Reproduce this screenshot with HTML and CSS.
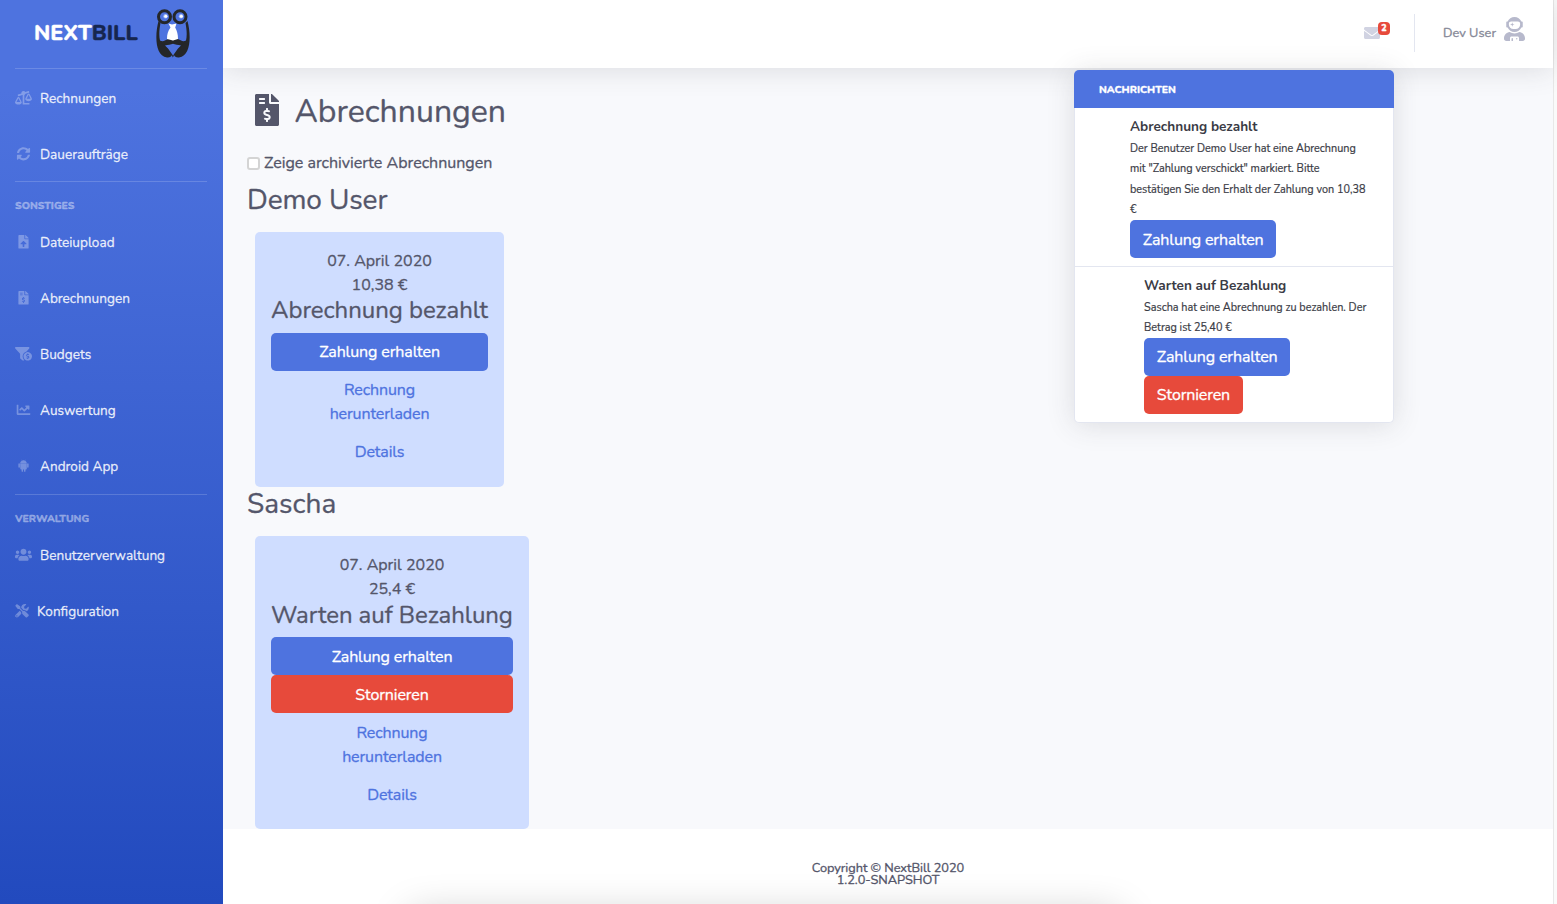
FILE: index.html
```html
<!DOCTYPE html>
<html lang="de">
<head>
<meta charset="utf-8">
<title>NextBill</title>
<link rel="stylesheet" href="styles.css">
</head>
<body>
<div class="page">
  <aside class="sidebar">
    <div class="brand">
      <div class="brand-name">NEXT<span class="brand-dark">BILL</span></div>
      <svg class="brand-logo" viewBox="0 0 34 50">
        <path d="M2.500 12C-1 25-1.500 47 11 48.500C14 48.800 16 47 17 44.500C18 47 20 48.800 23 48.500C35.500 47 35 25 31.500 12L29.500 14C31 22 31 27 30 31.500C27 33 25 31.500 23 30.500C21 29.500 19 29.500 17 31.500C15 29.500 13 29.500 11 30.500C9 31.500 7 33 4 31.500C3 27 3 22 4.500 14Z" fill="#242629"/>
        <path d="M17 49L16.300 46C16 43 19 41 19 38C19 36.500 18 35 17 34.500L15 34.500C14 37 16 40 17 42Z" fill="#242629"/>
        <path d="M16.400 47V44.500C13.500 40.500 9.500 39.500 7 35.500C10.500 36.300 14 36 17 34.500C20 36 23.500 36.300 27 35.500C24.500 39.500 20.500 40.500 17.600 44.500V47Z" fill="#242629"/>
        <path d="M16.600 48V44C13.500 39 8.500 38.500 5.500 34.500C9 35.800 12 35.300 13.500 35C13.800 38.500 15.500 41 17 43C18.500 41 20.200 38.500 20.500 35C22 35.300 25 35.800 28.500 34.500C25.500 38.500 20.500 39 17.400 44V48Z" fill="#242629"/>
        <path d="M17 46.500L12 39.500L9 36.500C12 36 15 35.800 17 34.800C19 35.800 22 36 25 36.500L22 39.500Z" fill="#4e73df"/>
        <path d="M12.500 14.500L16 15.500L20.500 14.500L19.200 18.500C21 22 22 25 22 30L17 31.500L11 30C11 25 12 22 14.500 18.500Z" fill="#fff"/>
        <circle cx="8.500" cy="7.800" r="6" fill="#4e73df" stroke="#242629" stroke-width="3"/>
        <circle cx="24" cy="7.800" r="6" fill="#4e73df" stroke="#242629" stroke-width="3"/>
        <circle cx="9.500" cy="7.300" r="2.200" fill="#9fb6f2"/><circle cx="25" cy="7.300" r="2.200" fill="#9fb6f2"/>
        <circle cx="9.800" cy="7.200" r="1.500" fill="#fff"/><circle cx="25.300" cy="7.200" r="1.500" fill="#fff"/>
      </svg>
    </div>
    <hr class="divider">
    <nav class="nav nav-first">
      <a class="nav-item"><svg class="nav-icon" viewBox="0 0 640 512"><path d="M528 448H352V153.250c20.420-8.940 36.100-26.220 43.380-47.470l132-44.260c8.380-2.810 12.890-11.880 10.080-20.260l-10.170-30.340C524.480 2.540 515.410-1.970 507.030.84L389.110 40.370C375.300 16.360 349.690 0 320 0c-44.180 0-80 35.820-80 80 0 3.430.59 6.710 1.010 10.030l-128.390 43.050c-8.380 2.810-12.890 11.880-10.080 20.260l10.170 30.340c2.810 8.380 11.880 12.890 20.260 10.080l142.050-47.630c4.070 2.770 8.430 5.120 12.990 7.120V496c0 8.840 7.160 16 16 16h224c8.840 0 16-7.160 16-16v-32c-.01-8.840-7.170-16-16.010-16zm111.980-144c0-16.180 1.340-8.730-85.050-181.510-17.650-35.290-68.190-35.360-85.870 0-87.120 174.260-85.040 165.840-85.040 181.510H384c0 44.180 57.310 80 128 80s128-35.820 128-80h-.02zM440 288l72-144 72 144H440zm-269.070-37.510c-17.650-35.290-68.190-35.360-85.870 0C-2.060 424.750.02 416.330.02 432H0c0 44.180 57.310 80 128 80s128-35.820 128-80h-.02c0-16.180 1.350-8.730-85.050-181.510zM56 416l72-144 72 144H56z"/></svg><span>Rechnungen</span></a>
      <a class="nav-item"><svg class="nav-icon" viewBox="-64 0 640 512"><path d="M370.720 133.280C339.458 104.008 298.888 87.962 255.848 88c-77.458.068-144.328 53.178-162.791 126.850-1.344 5.363-6.122 9.150-11.651 9.150H24.103c-7.498 0-13.194-6.807-11.807-14.176C33.933 94.924 134.813 8 256 8c66.448 0 126.791 26.136 171.315 68.685L463.030 40.970C478.149 25.851 504 36.559 504 57.941V192c0 13.255-10.745 24-24 24H345.941c-21.382 0-32.090-25.851-16.971-40.971l41.750-41.749zM32 296h134.059c21.382 0 32.090 25.851 16.971 40.971l-41.750 41.750c31.262 29.273 71.835 45.319 114.876 45.280 77.418-.07 144.315-53.144 162.787-126.849 1.344-5.363 6.122-9.150 11.651-9.150h57.304c7.498 0 13.194 6.807 11.807 14.176C478.067 417.076 377.187 504 256 504c-66.448 0-126.791-26.136-171.315-68.685L48.970 471.030C33.851 486.149 8 475.441 8 454.059V320c0-13.255 10.745-24 24-24z"/></svg><span>Daueraufträge</span></a>
    </nav>
    <hr class="divider divider-up">
    <div class="nav-heading">SONSTIGES</div>
    <nav class="nav">
      <a class="nav-item"><svg class="nav-icon" viewBox="-128 0 640 512"><path d="M224 136V0H24C10.700 0 0 10.700 0 24v464c0 13.300 10.700 24 24 24h336c13.300 0 24-10.700 24-24V160H248c-13.200 0-24-10.800-24-24zm65.180 216.010H224v80c0 8.840-7.160 16-16 16h-32c-8.840 0-16-7.160-16-16v-80H94.820c-14.280 0-21.410-17.290-11.270-27.360l96.420-95.700c6.650-6.610 17.390-6.610 24.040 0l96.420 95.700c10.150 10.070 3.030 27.360-11.250 27.360zM377 105L279.100 7c-4.500-4.500-10.600-7-17-7H256v128h128v-6.100c0-6.300-2.500-12.400-7-16.900z"/></svg><span>Dateiupload</span></a>
      <a class="nav-item"><svg class="nav-icon" viewBox="-128 0 640 512"><path d="M377 105L279.100 7c-4.500-4.500-10.600-7-17-7H256v128h128v-6.100c0-6.300-2.500-12.400-7-16.900zm-153 31V0H24C10.700 0 0 10.700 0 24v464c0 13.300 10.700 24 24 24h336c13.300 0 24-10.700 24-24V160H248c-13.200 0-24-10.800-24-24zM64 72c0-4.420 3.580-8 8-8h80c4.420 0 8 3.580 8 8v16c0 4.420-3.580 8-8 8H72c-4.420 0-8-3.580-8-8V72zm0 80v-16c0-4.420 3.580-8 8-8h80c4.420 0 8 3.580 8 8v16c0 4.420-3.580 8-8 8H72c-4.420 0-8-3.580-8-8zm144 263.880V440c0 4.420-3.580 8-8 8h-16c-4.420 0-8-3.580-8-8v-24.290c-11.290-.58-22.270-4.520-31.370-11.350-3.900-2.930-4.100-8.770-.57-12.140l11.750-11.210c2.770-2.640 6.890-2.760 10.130-.73 3.870 2.420 8.260 3.720 12.820 3.720h28.110c6.500 0 11.800-5.920 11.800-13.190 0-5.950-3.610-11.190-8.770-12.730l-45-13.500c-18.590-5.580-31.580-23.420-31.580-43.390 0-24.520 19.050-44.440 42.670-45.070V232c0-4.420 3.580-8 8-8h16c4.420 0 8 3.580 8 8v24.290c11.290.58 22.270 4.510 31.370 11.350 3.900 2.930 4.100 8.770.57 12.140l-11.750 11.210c-2.770 2.640-6.890 2.760-10.130.73-3.870-2.430-8.260-3.720-12.820-3.720h-28.110c-6.500 0-11.800 5.920-11.800 13.190 0 5.950 3.610 11.190 8.770 12.730l45 13.500c18.590 5.580 31.580 23.420 31.580 43.390 0 24.530-19.050 44.440-42.670 45.070z"/></svg><span>Abrechnungen</span></a>
      <a class="nav-item"><svg class="nav-icon" viewBox="0 0 640 512"><path fill-rule="evenodd" d="M433.460 165.940l101.200-111.870C554.610 34.120 540.480 0 512.260 0H31.740C3.520 0-10.610 34.120 9.340 54.070L192 256v155.920c0 12.590 5.930 24.440 16 32l79.990 60c20.860 15.640 48.470 6.970 59.220-13.570C310.800 455.380 288 406.350 288 352c0-89.790 62.050-165.170 145.460-186.060zM480 192a160 160 0 1 0 .1 0zm16 239.880V448c0 4.420-3.580 8-8 8h-16c-4.420 0-8-3.580-8-8v-16.290c-11.290-.58-22.270-4.520-31.370-11.350-3.900-2.930-4.100-8.770-.57-12.140l11.750-11.210c2.770-2.640 6.890-2.760 10.130-.73 3.870 2.420 8.260 3.720 12.820 3.720h28.110c6.500 0 11.800-5.920 11.800-13.190 0-5.950-3.610-11.190-8.770-12.730l-45-13.500c-18.590-5.580-31.580-23.420-31.580-43.390 0-24.520 19.050-44.440 42.670-45.070V256c0-4.420 3.580-8 8-8h16c4.420 0 8 3.580 8 8v16.290c11.290.58 22.270 4.510 31.370 11.350 3.900 2.930 4.100 8.770.57 12.140l-11.750 11.210c-2.770 2.640-6.890 2.760-10.130.73-3.870-2.430-8.260-3.720-12.820-3.720h-28.110c-6.500 0-11.800 5.920-11.800 13.190 0 5.950 3.610 11.190 8.770 12.730l45 13.500c18.590 5.580 31.580 23.420 31.580 43.390 0 24.530-19.040 44.440-42.670 45.070z"/></svg><span>Budgets</span></a>
      <a class="nav-item"><svg class="nav-icon" viewBox="-64 0 640 512"><path d="M496 384H64V80c0-8.840-7.160-16-16-16H16C7.160 64 0 71.160 0 80v336c0 17.670 14.330 32 32 32h464c8.840 0 16-7.160 16-16v-32c0-8.840-7.160-16-16-16zM464 96H345.940c-21.380 0-32.090 25.850-16.970 40.970l32.400 32.400L288 242.750l-73.370-73.370c-12.500-12.500-32.760-12.500-45.250 0l-68.690 68.690c-6.250 6.250-6.250 16.380 0 22.630l22.620 22.620c6.250 6.250 16.380 6.250 22.630 0L192 237.250l73.370 73.370c12.500 12.500 32.760 12.500 45.250 0l96-96 32.400 32.400c15.120 15.120 40.970 4.410 40.970-16.970V112c.01-8.840-7.150-16-15.990-16z"/></svg><span>Auswertung</span></a>
      <a class="nav-item"><svg class="nav-icon" viewBox="-96 0 640 512"><path d="M32 184v117c0 32 56 32 56 0V184c0-32-56-32-56 0zm68-7h248v192c0 16-13 29-29 29h-20v61c0 32-55 32-55 0v-61h-38v61c0 32-54 32-54 0v-61h-20c-16 0-29-13-29-29zm248-12H99c0-43 26-80 64-99l-19-35c-3-7 6-10 9-5l20 36c32-14 70-14 102 0l20-36c3-5 12-2 9 5l-19 35c37 19 63 56 63 99zm12 19c0-32 56-32 56 0v117c0 32-56 32-56 0z"/></svg><span>Android App</span></a>
    </nav>
    <hr class="divider">
    <div class="nav-heading">VERWALTUNG</div>
    <nav class="nav">
      <a class="nav-item"><svg class="nav-icon" viewBox="0 0 640 512"><path d="M96 224c35.300 0 64-28.700 64-64s-28.700-64-64-64-64 28.700-64 64 28.700 64 64 64zm448 0c35.300 0 64-28.700 64-64s-28.700-64-64-64-64 28.700-64 64 28.700 64 64 64zm32 32h-64c-17.600 0-33.500 7.100-45.100 18.600 40.300 22.100 68.900 62 75.100 109.400h66c17.700 0 32-14.300 32-32v-32c0-35.300-28.700-64-64-64zm-256 0c61.900 0 112-50.100 112-112S381.900 32 320 32 208 82.100 208 144s50.100 112 112 112zm76.800 32h-8.300c-20.800 10-43.900 16-68.500 16s-47.600-6-68.500-16h-8.300C179.600 288 128 339.600 128 403.200V432c0 26.500 21.500 48 48 48h288c26.500 0 48-21.500 48-48v-28.800c0-63.600-51.600-115.200-115.200-115.200zm-223.700-13.400C161.500 263.100 145.600 256 128 256H64c-35.300 0-64 28.700-64 64v32c0 17.700 14.300 32 32 32h65.900c6.300-47.400 34.900-87.300 75.200-109.400z"/></svg><span>Benutzerverwaltung</span></a>
      <a class="nav-item"><svg class="nav-icon nav-icon-narrow" viewBox="0 0 512 512"><path d="M501.100 395.700L384 278.600c-23.100-23.100-57.600-27.600-85.400-13.900L192 158.100V96L64 0 0 64l96 128h62.100l106.600 106.600c-13.600 27.800-9.200 62.300 13.900 85.400l117.100 117.100c14.600 14.600 38.200 14.600 52.700 0l52.700-52.700c14.500-14.600 14.500-38.200 0-52.700zM331.700 225c28.300 0 54.900 11 74.900 31l19.400 19.400c15.800-6.900 30.800-16.500 43.800-29.500 37.100-37.100 49.700-89.300 37.900-136.700-2.200-9-13.500-12.100-20.100-5.500l-74.400 74.400-67.900-11.300L334 98.900l74.400-74.400c6.600-6.600 3.400-17.900-5.700-20.200-47.400-11.700-99.600.9-136.600 37.900-28.500 28.500-41.900 66.100-41.200 103.600l82.100 82.100c8.100-1.900 16.500-2.900 24.700-2.900zm-103.900 82l-56.700-56.700L18.700 402.800c-25 25-25 65.500 0 90.500s65.500 25 90.500 0l123.600-123.600c-7.600-19.900-9.900-41.600-5-62.700zM64 472c-13.200 0-24-10.800-24-24 0-13.300 10.700-24 24-24s24 10.700 24 24c0 13.200-10.700 24-24 24z"/></svg><span>Konfiguration</span></a>
    </nav>
  </aside>

  <div class="content">
    <header class="topbar">
      <div class="mail">
        <svg class="mail-icon" viewBox="0 0 512 512"><path d="M502.300 190.800c3.900-3.100 9.700-.2 9.700 4.700V400c0 26.500-21.500 48-48 48H48c-26.500 0-48-21.500-48-48V195.600c0-5 5.700-7.800 9.700-4.700 22.400 17.400 52.100 39.500 154.100 113.600 21.100 15.400 56.700 47.800 92.200 47.600 35.700.3 72-32.800 92.300-47.600 102-74.100 131.600-96.300 154-113.700zM256 320c23.200.4 56.600-29.200 73.400-41.400 132.700-96.300 142.800-104.700 173.400-128.700 5.800-4.500 9.200-11.500 9.200-18.900v-19c0-26.500-21.500-48-48-48H48c-26.500 0-48 21.500-48 48v19c0 7.400 3.400 14.300 9.200 18.900 30.600 23.900 40.700 32.400 173.400 128.700 16.800 12.200 50.200 41.800 73.400 41.400z"/></svg>
        <span class="badge">2</span>
      </div>
      <div class="separator"></div>
      <span class="user-name">Dev User</span>
      <svg class="avatar" viewBox="0 0 448 512"><path d="M64 224h13.500c24.700 56.500 80.900 96 146.500 96s121.800-39.500 146.500-96H384c8.800 0 16-7.200 16-16v-96c0-8.800-7.200-16-16-16h-13.500C345.800 39.500 289.600 0 224 0S102.200 39.500 77.500 96H64c-8.800 0-16 7.200-16 16v96c0 8.800 7.200 16 16 16zm40-88c0-22.100 21.500-40 48-40h144c26.500 0 48 17.900 48 40v24c0 53-43 96-96 96h-48c-53 0-96-43-96-96v-24zm72 72l12-36 36-12-36-12-12-36-12 36-36 12 36 12 12 36zm151.600 113.400C297.700 340.700 262.200 352 224 352s-73.700-11.300-103.600-30.600C52.900 328.500 0 385 0 454.400v9.600c0 26.500 21.500 48 48 48h80v-64c0-17.700 14.300-32 32-32h128c17.700 0 32 14.300 32 32v64h80c26.500 0 48-21.500 48-48v-9.600c0-69.400-52.900-125.900-120.400-133zM272 448c-8.800 0-16 7.200-16 16s7.200 16 16 16 16-7.200 16-16-7.200-16-16-16zm-96 0c-8.800 0-16 7.200-16 16v48h32v-48c0-8.800-7.200-16-16-16z"/></svg>
      <section class="messages">
        <h6 class="messages-head">NACHRICHTEN</h6>
        <div class="message">
          <div class="message-title">Abrechnung bezahlt</div>
          <div class="message-text">Der Benutzer Demo User hat eine Abrechnung<br>mit "Zahlung verschickt" markiert. Bitte<br>bestätigen Sie den Erhalt der Zahlung von 10,38<br>€</div>
          <a class="btn btn-primary btn-low">Zahlung erhalten</a>
        </div>
        <div class="message message-wide">
          <div class="message-title">Warten auf Bezahlung</div>
          <div class="message-text">Sascha hat eine Abrechnung zu bezahlen. Der<br>Betrag ist 25,40 €</div>
          <a class="btn btn-primary">Zahlung erhalten</a>
          <a class="btn btn-danger">Stornieren</a>
        </div>
      </section>
    </header>

    <main class="main">
      <h1 class="title"><svg class="title-icon" viewBox="0 0 384 512"><path d="M377 105L279.100 7c-4.500-4.500-10.600-7-17-7H256v128h128v-6.100c0-6.300-2.500-12.400-7-16.900zm-153 31V0H24C10.700 0 0 10.700 0 24v464c0 13.300 10.700 24 24 24h336c13.300 0 24-10.700 24-24V160H248c-13.200 0-24-10.800-24-24zM64 72c0-4.420 3.580-8 8-8h80c4.420 0 8 3.580 8 8v16c0 4.420-3.580 8-8 8H72c-4.420 0-8-3.580-8-8V72zm0 80v-16c0-4.420 3.580-8 8-8h80c4.420 0 8 3.580 8 8v16c0 4.420-3.580 8-8 8H72c-4.420 0-8-3.580-8-8zm144 263.880V440c0 4.420-3.580 8-8 8h-16c-4.420 0-8-3.580-8-8v-24.290c-11.290-.58-22.270-4.520-31.370-11.350-3.900-2.930-4.100-8.770-.57-12.140l11.750-11.210c2.770-2.640 6.890-2.760 10.130-.73 3.870 2.420 8.260 3.720 12.820 3.720h28.110c6.500 0 11.800-5.920 11.800-13.190 0-5.950-3.610-11.190-8.770-12.730l-45-13.500c-18.590-5.580-31.580-23.420-31.580-43.390 0-24.520 19.050-44.440 42.670-45.070V232c0-4.420 3.580-8 8-8h16c4.420 0 8 3.580 8 8v24.290c11.290.58 22.270 4.510 31.370 11.350 3.900 2.930 4.100 8.770.57 12.140l-11.750 11.210c-2.770 2.640-6.890 2.760-10.130.73-3.870-2.430-8.260-3.720-12.820-3.720h-28.110c-6.500 0-11.800 5.920-11.800 13.190 0 5.950 3.610 11.190 8.770 12.730l45 13.500c18.590 5.580 31.580 23.420 31.580 43.390 0 24.530-19.050 44.440-42.670 45.070z"/></svg><span>Abrechnungen</span></h1>
      <label class="check"><span class="check-box"></span><span>Zeige archivierte Abrechnungen</span></label>
      <h2 class="person person-first">Demo User</h2>
      <section class="card card-demo">
        <div class="line">07. April 2020</div>
        <div class="line">10,38 €</div>
        <h4 class="status">Abrechnung bezahlt</h4>
        <a class="btn btn-primary">Zahlung erhalten</a>
        <a class="btn btn-link">Rechnung<br>herunterladen</a>
        <a class="btn btn-link">Details</a>
      </section>
      <h2 class="person">Sascha</h2>
      <section class="card card-sascha">
        <div class="line">07. April 2020</div>
        <div class="line">25,4 €</div>
        <h4 class="status status-low">Warten auf Bezahlung</h4>
        <a class="btn btn-primary btn-low">Zahlung erhalten</a>
        <a class="btn btn-danger btn-low">Stornieren</a>
        <a class="btn btn-link btn-low">Rechnung<br>herunterladen</a>
        <a class="btn btn-link btn-low">Details</a>
      </section>
    </main>
    <footer class="footer">
      <div>Copyright © NextBill 2020</div>
      <div>1.2.0-SNAPSHOT</div>
    </footer>
  </div>
  <div class="scroll-track"></div>
  <div class="bottom-glow"></div>
</div>
</body>
</html>
```
FILE: styles.css
```css
* { box-sizing: border-box; }
body {
  margin: 0;
  font-family: Nunito, Lato, "Open Sans", sans-serif;
  font-size: 16px;
  line-height: 24px;
  color: #54566a;
  white-space: nowrap;
  -webkit-text-stroke: 0.3px;
}
h1, h2, h4, h6 { margin: 0; font-weight: 400; }
.page { position: relative; display: flex; width: 1557px; height: 904px; overflow: hidden; background: #f8f9fc; }

.sidebar { position: relative; z-index: 3; flex: none; width: 223px; background: linear-gradient(180deg, #4e73df 10%, #224abe 100%); }
.brand { display: flex; align-items: center; height: 68px; padding-left: 34px; }
.brand-name { width: 122px; padding-bottom: 3px; font-size: 21.6px; font-weight: 800; color: #fff; }
.brand-dark { color: #16264f; }
.brand-logo { width: 34px; height: 50px; margin-bottom: 1px; }
.divider { height: 1px; margin: 0 16px 0 15px; border: 0; background: rgba(255, 255, 255, 0.17); }
.divider-up { margin-top: -1px; }
.nav-first { padding-top: 1px; }
.nav-item { display: flex; align-items: center; height: 56px; padding-left: 15px; gap: 8px; font-size: 13.6px; color: rgba(255, 255, 255, 0.84); }
.nav-item span { padding-top: 2px; }
.nav-icon { width: 17px; height: 13.6px; fill: rgba(255, 255, 255, 0.3); }
.nav-icon-narrow { width: 14px; }
.nav-heading { height: 32px; padding: 15px 0 0 15px; font-size: 10.4px; line-height: 17px; font-weight: 800; color: rgba(255, 255, 255, 0.4); }

.content { flex: none; display: flex; flex-direction: column; width: 1330px; }
.topbar { position: relative; z-index: 2; display: flex; flex: none; align-items: center; height: 68px; padding-left: 1141px; background: #fff; box-shadow: 0 2px 28px rgba(58, 59, 69, 0.15); }
.mail { position: relative; width: 50px; height: 16px; margin-bottom: 2px; }
.mail-icon { display: block; width: 16px; height: 16px; fill: #d1d3e2; }
.badge { position: absolute; left: 14px; top: -3px; width: 12px; height: 13px; border-radius: 4px; background: #e74a3b; color: #fff; font-size: 9px; line-height: 13px; font-weight: 800; text-align: center; }
.separator { width: 1px; height: 38px; margin-top: -2px; background: #e3e6f0; }
.user-name { width: 61px; margin: 0 0 3px 28px; font-size: 12.8px; color: #858796; }
.avatar { width: 21px; height: 24px; margin-bottom: 11px; fill: #b7b9cc; }

.messages { position: absolute; left: 851px; top: 70px; width: 320px; height: 353px; border: 1px solid #e3e6f0; border-top: 0; border-radius: 5px; background: #fff; box-shadow: 0 2px 28px rgba(58, 59, 69, 0.15); }
.messages-head { height: 38px; margin: 0 -1px; padding: 1px 0 0 25px; border-radius: 5px 5px 0 0; background: #4e73df; color: #fff; font-size: 10.4px; line-height: 37px; font-weight: 800; }
.message { display: flex; flex-direction: column; align-items: flex-start; padding: 8px 0 8px 55px; border-bottom: 1px solid #e3e6f0; color: #3a3b45; }
.message-wide { padding-left: 69px; border-bottom: 0; }
.message-title { height: 22px; font-size: 13.6px; line-height: 21px; font-weight: 700; -webkit-text-stroke: 0; }
.message-text { margin-bottom: -0.6px; padding-top: 0.6px; font-size: 10.85px; line-height: 20.5px; -webkit-text-stroke: 0.2px; }

.main { flex: none; height: 761px; padding: 24.4px 24px 0; }
.title { display: flex; align-items: center; height: 36px; padding-left: 8px; gap: 16px; font-size: 32px; line-height: 36px; }
.title-icon { width: 24px; height: 32px; margin-bottom: 1px; fill: #54566a; }
.title span { margin-left: -0.5px; padding-top: 3px; }
.check { display: flex; align-items: center; height: 24px; margin-top: 23px; gap: 4px; }
.check-box { width: 13px; height: 13px; border: 2px solid #d4d4d4; border-radius: 3px; background: #fff; }
.person { height: 33.6px; padding-top: 1px; font-size: 28px; line-height: 33px; }
.person-first { margin-top: 7px; padding-top: 2px; letter-spacing: -0.1px; }
.card { margin: 16px 0 0 8px; padding: 16px; border-radius: 5px; background: #cfddff; text-align: center; }
.card-demo { width: 249px; height: 254.8px; }
.card-sascha { width: 274px; height: 292.8px; }
.line { height: 24px; padding-top: 1px; line-height: 24px; }
.status { height: 36.8px; margin: 0 -4px; font-size: 24px; line-height: 28.8px; letter-spacing: -0.05px; }
.status-low { padding-top: 1px; }
.btn { display: block; padding: 7px 12.8px; border-radius: 5px; color: #fff; letter-spacing: -0.12px; }
.btn-low { padding-top: 8px; padding-bottom: 6px; }
.btn-primary { background: #4e73df; }
.btn-danger { background: #e74a3b; }
.btn-link { color: #4e73df; }

.footer { flex: 1; padding-top: 33px; background: #fff; text-align: center; font-size: 12.8px; line-height: 12px; letter-spacing: -0.05px; }
.scroll-track { flex: 1; border-left: 1px solid #e8e8e8; background: #fafafa; }
.bottom-glow { position: absolute; z-index: 3; left: 415px; top: 920px; width: 700px; height: 40px; box-shadow: 0 0 40px 5px rgba(0, 0, 0, 0.22); }
```
